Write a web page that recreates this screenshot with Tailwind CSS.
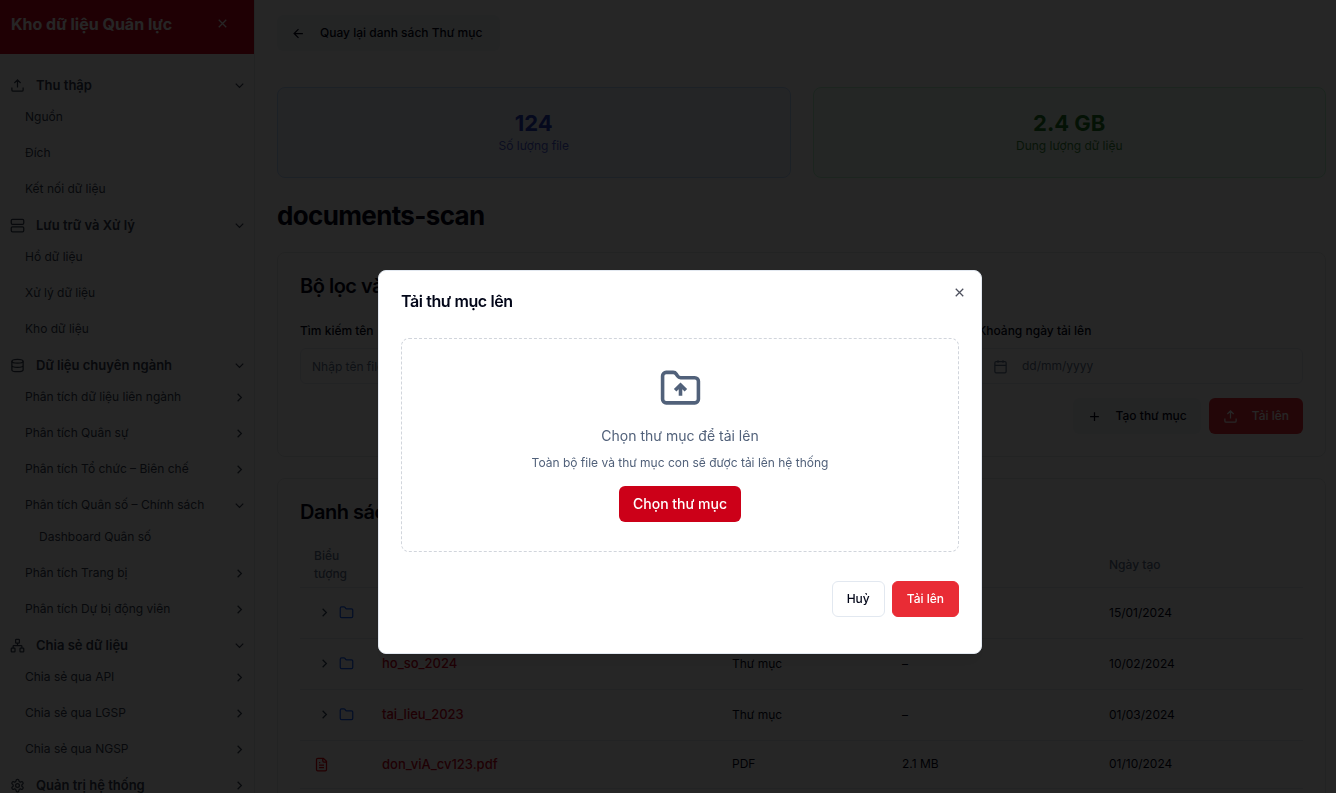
<!DOCTYPE html>
<html lang="vi">
<head>
    <meta charset="UTF-8">
    <meta name="viewport" content="width=device-width, initial-scale=1.0">
    <title>Kho dữ liệu Quân lực</title>
    <script src="https://cdn.jsdelivr.net/npm/@tailwindcss/browser@4"></script>
    <style>
        body {
            font-family: Inter, 'Liberation Sans', sans-serif;
        }
    </style>
</head>
<body class="h-screen overflow-hidden bg-white text-xs leading-[18px] text-slate-950">

<!-- icons -->
<svg class="hidden">
    <defs>
        <symbol id="i-x" viewBox="0 0 24 24"><path d="M18 6 6 18M6 6l12 12"/></symbol>
        <symbol id="i-down" viewBox="0 0 24 24"><path d="m6 9 6 6 6-6"/></symbol>
        <symbol id="i-right" viewBox="0 0 24 24"><path d="m9 18 6-6-6-6"/></symbol>
        <symbol id="i-left" viewBox="0 0 24 24"><path d="m12 19-7-7 7-7M19 12H5"/></symbol>
        <symbol id="i-plus" viewBox="0 0 24 24"><path d="M5 12h14M12 5v14"/></symbol>
        <symbol id="i-upload" viewBox="0 0 24 24"><path d="M21 15v4a2 2 0 0 1-2 2H5a2 2 0 0 1-2-2v-4M17 8l-5-5-5 5M12 3v12"/></symbol>
        <symbol id="i-server" viewBox="0 0 24 24"><rect width="20" height="8" x="2" y="2" rx="2"/><rect width="20" height="8" x="2" y="14" rx="2"/><path d="M6 6h.01M6 18h.01"/></symbol>
        <symbol id="i-database" viewBox="0 0 24 24"><ellipse cx="12" cy="5" rx="9" ry="3"/><path d="M3 5v14a9 3 0 0 0 18 0V5M3 12a9 3 0 0 0 18 0"/></symbol>
        <symbol id="i-network" viewBox="0 0 24 24"><rect x="16" y="16" width="6" height="6" rx="1"/><rect x="2" y="16" width="6" height="6" rx="1"/><rect x="9" y="2" width="6" height="6" rx="1"/><path d="M5 16v-3a1 1 0 0 1 1-1h12a1 1 0 0 1 1 1v3M12 12V8"/></symbol>
        <symbol id="i-settings" viewBox="0 0 24 24"><path d="M12.22 2h-.44a2 2 0 0 0-2 2v.18a2 2 0 0 1-1 1.73l-.43.25a2 2 0 0 1-2 0l-.15-.08a2 2 0 0 0-2.73.73l-.22.38a2 2 0 0 0 .73 2.73l.15.1a2 2 0 0 1 1 1.72v.51a2 2 0 0 1-1 1.74l-.15.09a2 2 0 0 0-.73 2.73l.22.38a2 2 0 0 0 2.73.73l.15-.08a2 2 0 0 1 2 0l.43.25a2 2 0 0 1 1 1.73V20a2 2 0 0 0 2 2h.44a2 2 0 0 0 2-2v-.18a2 2 0 0 1 1-1.73l.43-.25a2 2 0 0 1 2 0l.15.08a2 2 0 0 0 2.73-.73l.22-.39a2 2 0 0 0-.73-2.73l-.15-.08a2 2 0 0 1-1-1.74v-.5a2 2 0 0 1 1-1.74l.15-.09a2 2 0 0 0 .73-2.73l-.22-.38a2 2 0 0 0-2.73-.73l-.15.08a2 2 0 0 1-2 0l-.43-.25a2 2 0 0 1-1-1.73V4a2 2 0 0 0-2-2z"/><circle cx="12" cy="12" r="3"/></symbol>
        <symbol id="i-calendar" viewBox="0 0 24 24"><path d="M8 2v4M16 2v4M3 10h18"/><rect width="18" height="18" x="3" y="4" rx="2"/></symbol>
        <symbol id="i-folder" viewBox="0 0 24 24"><path d="M20 20a2 2 0 0 0 2-2V8a2 2 0 0 0-2-2h-7.900a2 2 0 0 1-1.690-.9L9.600 3.900A2 2 0 0 0 7.930 3H4a2 2 0 0 0-2 2v13a2 2 0 0 0 2 2Z"/></symbol>
        <symbol id="i-folder-up" viewBox="0 0 24 24"><path d="M20 20a2 2 0 0 0 2-2V8a2 2 0 0 0-2-2h-7.900a2 2 0 0 1-1.690-.9L9.600 3.900A2 2 0 0 0 7.930 3H4a2 2 0 0 0-2 2v13a2 2 0 0 0 2 2ZM12 10v6M9 13l3-3 3 3"/></symbol>
        <symbol id="i-file" viewBox="0 0 24 24"><path d="M15 2H6a2 2 0 0 0-2 2v16a2 2 0 0 0 2 2h12a2 2 0 0 0 2-2V7ZM14 2v4a2 2 0 0 0 2 2h4M10 9H8M16 13H8M16 17H8"/></symbol>
    </defs>
</svg>

<div class="flex h-full">
    <aside class="w-[255px] shrink-0 overflow-hidden border-r border-gray-200">
        <div class="flex h-[54px] items-start justify-between bg-[#d0021b] pt-3 pr-6 pl-[11px] text-white">
            <h2 class="text-base leading-6 font-bold">Kho dữ liệu Quân lực</h2>
            <button type="button" aria-label="Đóng menu" class="pt-1"><svg class="size-[15px] fill-none stroke-current stroke-2"><use href="#i-x"/></svg></button>
        </div>
        <nav id="menu" class="flex flex-col gap-1 pt-[15px] text-gray-700"></nav>
    </aside>

    <main class="min-w-0 flex-1 pt-[15px] pr-[10px] pl-[22px]">
        <button type="button" class="flex h-9 items-center gap-[14px] rounded-md bg-slate-100 pr-[18px] pl-[14px] font-medium">
            <svg class="size-[15px] fill-none stroke-current stroke-2"><use href="#i-left"/></svg>
            Quay lại danh sách Thư mục
        </button>

        <div class="mt-9 grid grid-cols-2 gap-[22px] text-center">
            <div class="rounded-lg border border-blue-200 bg-blue-50 pt-[21px] pb-[23px]">
                <div class="text-[22px] leading-7 font-bold text-[#2540c4]">124</div>
                <div class="leading-[17px] text-[#4f5fd8]">Số lượng file</div>
            </div>
            <div class="rounded-lg border border-green-200 bg-green-50 pt-[21px] pb-[23px]">
                <div class="text-[22px] leading-7 font-bold text-[#1c7a24]">2.4 GB</div>
                <div class="leading-[17px] text-[#3a8a3c]">Dung lượng dữ liệu</div>
            </div>
        </div>

        <h1 class="mt-[22px] text-[26px] leading-8 font-bold tracking-tight">documents-scan</h1>

        <section class="mt-5 rounded-lg border border-gray-200 p-[22px]">
            <h3 class="text-xl leading-[22px] font-semibold tracking-tight">Bộ lọc và</h3>
            <div class="mt-[25px] grid grid-cols-3 gap-[14px]">
                <div>
                    <label for="keyword" class="block font-medium">Tìm kiếm tên</label>
                    <input id="keyword" type="text" placeholder="Nhập tên file" class="mt-2 h-9 w-full rounded-md border border-slate-200 px-[11px] placeholder:text-slate-500">
                </div>
                <div class="col-start-3">
                    <label for="date" class="block font-medium">Khoảng ngày tải lên</label>
                    <div class="mt-2 flex h-9 items-center gap-[14px] rounded-md border border-slate-200 px-[14px] text-slate-500">
                        <svg class="size-[15px] shrink-0 fill-none stroke-current stroke-2"><use href="#i-calendar"/></svg>
                        <input id="date" type="text" placeholder="dd/mm/yyyy" class="min-w-0 flex-1 placeholder:text-slate-500">
                    </div>
                </div>
            </div>
            <div class="mt-[14px] flex justify-end gap-2">
                <button type="button" class="flex h-9 items-center gap-[14px] rounded-md bg-slate-100 px-[14px] font-medium">
                    <svg class="size-[15px] fill-none stroke-current stroke-2"><use href="#i-plus"/></svg>
                    Tạo thư mục
                </button>
                <button type="button" class="flex h-9 items-center gap-[14px] rounded-md bg-[#e92c35] px-[14px] font-medium text-white">
                    <svg class="size-[15px] fill-none stroke-current stroke-2"><use href="#i-upload"/></svg>
                    Tải lên
                </button>
            </div>
        </section>

        <section class="mt-[21px] rounded-lg border border-gray-200 p-[22px]">
            <h3 class="text-xl leading-[22px] font-semibold tracking-tight">Danh sách</h3>
            <table class="mt-5 w-full table-fixed text-left">
                <thead class="border-b border-slate-200 text-slate-500">
                    <tr class="h-[44px]">
                        <th class="w-[68px] px-[14px] font-medium">Biểu tượng</th>
                        <th class="w-[350px] px-[14px] font-medium">Tên</th>
                        <th class="w-[170px] px-[14px] font-medium">Loại</th>
                        <th class="w-[207px] px-[14px] font-medium">Kích thước</th>
                        <th class="px-[14px] font-medium">Ngày tạo</th>
                    </tr>
                </thead>
                <tbody id="files"></tbody>
            </table>
        </section>
    </main>
</div>

<div class="fixed inset-0 bg-black/85"></div>

<div role="dialog" aria-modal="true" aria-labelledby="dialogTitle" class="fixed top-[270px] left-[378px] w-[604px] rounded-lg border border-slate-200 bg-white px-[22px] pt-[21px] pb-9 shadow-lg">
    <h2 id="dialogTitle" class="text-base leading-[18px] font-semibold tracking-tight">Tải thư mục lên</h2>
    <button type="button" aria-label="Đóng" class="absolute top-[14px] right-[14px] text-slate-950/70"><svg class="size-[15px] fill-none stroke-current stroke-2"><use href="#i-x"/></svg></button>

    <div class="mt-7 flex flex-col items-center rounded-lg border border-dashed border-gray-300 pt-7 pb-[29px] text-[#51617a]">
        <svg class="size-[43px] fill-none stroke-current stroke-2"><use href="#i-folder-up"/></svg>
        <p class="mt-[15px] text-sm leading-[22px]">Chọn thư mục để tải lên</p>
        <p class="mt-[7px] leading-[18px]">Toàn bộ file và thư mục con sẽ được tải lên hệ thống</p>
        <button type="button" class="mt-[14px] h-9 rounded-md bg-[#cc0018] px-[14px] text-sm font-medium text-white">Chọn thư mục</button>
    </div>

    <div class="mt-[29px] flex justify-end gap-[7px]">
        <button type="button" class="h-9 rounded-md border border-slate-200 px-[14px] font-medium">Huỷ</button>
        <button type="button" class="h-9 rounded-md border border-[#e92c35] bg-[#e92c35] px-[14px] font-medium text-white">Tải lên</button>
    </div>
</div>

<script>
    const icon = (name) => `<svg class="size-[15px] shrink-0 fill-none stroke-current stroke-2"><use href="#i-${name}"/></svg>`;

    // level 0 = group, 1 = item, 2 = sub item
    const menu = [
        { text: "Thu thập", level: 0, icon: "upload", arrow: "down" },
        { text: "Nguồn", level: 1 },
        { text: "Đích", level: 1 },
        { text: "Kết nối dữ liệu", level: 1 },
        { text: "Lưu trữ và Xử lý", level: 0, icon: "server", arrow: "down" },
        { text: "Hồ dữ liệu", level: 1 },
        { text: "Xử lý dữ liệu", level: 1 },
        { text: "Kho dữ liệu", level: 1 },
        { text: "Dữ liệu chuyên ngành", level: 0, icon: "database", arrow: "down" },
        { text: "Phân tích dữ liệu liên ngành", level: 1, arrow: "right" },
        { text: "Phân tích Quân sự", level: 1, arrow: "right" },
        { text: "Phân tích Tổ chức – Biên chế", level: 1, arrow: "right" },
        { text: "Phân tích Quân số – Chính sách", level: 1, arrow: "down" },
        { text: "Dashboard Quân số", level: 2 },
        { text: "Phân tích Trang bị", level: 1, arrow: "right" },
        { text: "Phân tích Dự bị động viên", level: 1, arrow: "right" },
        { text: "Chia sẻ dữ liệu", level: 0, icon: "network", arrow: "down" },
        { text: "Chia sẻ qua API", level: 1, arrow: "right" },
        { text: "Chia sẻ qua LGSP", level: 1, arrow: "right" },
        { text: "Chia sẻ qua NGSP", level: 1, arrow: "right" },
        { text: "Quản trị hệ thống", level: 0, icon: "settings", arrow: "right" },
    ];
    const levelClass = ["pl-[10px] text-[13px] font-semibold", "pl-[25px]", "pl-[39px]"];

    menu.forEach((item, i) => {
        // an opened entry sits flush with its first child
        const flush = i > 0 && item.level > menu[i - 1].level ? "-mt-1" : "";
        document.getElementById("menu").innerHTML += `
            <a href="#" class="flex h-8 shrink-0 items-center justify-between pr-[7px] ${levelClass[item.level]} ${flush}">
                <span class="flex items-center gap-[11px]">${item.icon ? icon(item.icon) : ""}${item.text}</span>
                ${item.arrow ? icon(item.arrow) : ""}
            </a>
        `;
    });

    const files = [
        { name: "don_vi_A", type: "Thư mục", size: "–", date: "15/01/2024", folder: true },
        { name: "ho_so_2024", type: "Thư mục", size: "–", date: "10/02/2024", folder: true },
        { name: "tai_lieu_2023", type: "Thư mục", size: "–", date: "01/03/2024", folder: true },
        { name: "don_viA_cv123.pdf", type: "PDF", size: "2.1 MB", date: "01/10/2024", folder: false },
    ];

    files.forEach(file => {
        const cell = file.folder
            ? `<div class="flex items-center gap-[7px] pl-[3px]"><span class="text-slate-700">${icon("right")}</span><span class="text-blue-600">${icon("folder")}</span></div>`
            : `<span class="text-red-600">${icon("file")}</span>`;
        document.getElementById("files").innerHTML += `
            <tr class="border-b border-slate-200 ${file.folder ? "h-[51px]" : "h-12"}">
                <td class="pl-[14px]">${cell}</td>
                <td class="px-[14px]"><a href="#" class="text-[13px] font-medium text-[#d0021b]">${file.name}</a></td>
                <td class="px-[14px]">${file.type}</td>
                <td class="px-[14px]">${file.size}</td>
                <td class="px-[14px]">${file.date}</td>
            </tr>
        `;
    });
</script>

</body>
</html>
